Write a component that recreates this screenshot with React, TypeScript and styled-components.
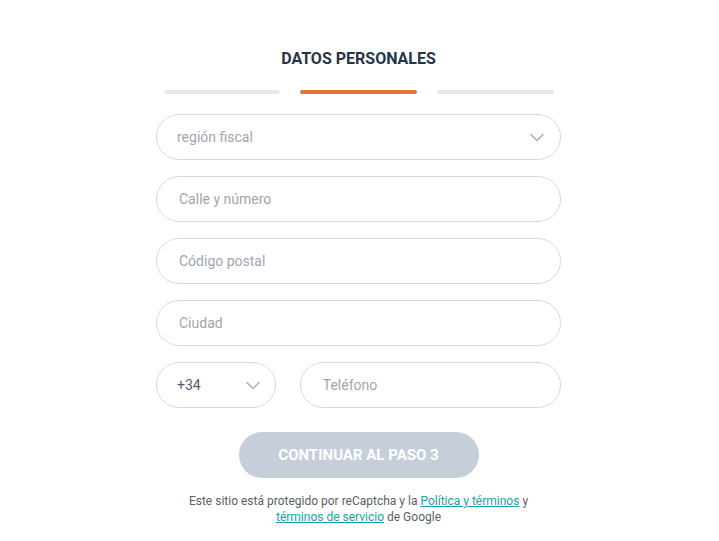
import React from "react";
import styled, { createGlobalStyle } from "styled-components";

const Global = createGlobalStyle`
  html, body { margin: 0; padding: 0; background: #fff; }
  body { font-family: Roboto, "Liberation Sans", Arial, sans-serif; }
  * { box-sizing: border-box; }
`;

const Page = styled.div`
  width: 717px;
  min-height: 541px;
  display: flex;
  flex-direction: column;
  align-items: center;
  padding-top: 49px;
`;

const Title = styled.h1`
  margin: 0;
  font-size: 16px;
  line-height: 20px;
  font-weight: 700;
  color: #263549;
  letter-spacing: 0;
`;

const Steps = styled.div`
  display: flex;
  gap: 20px;
  margin-top: 21px;
  width: 390px;
`;

const Step = styled.div<{ $active?: boolean }>`
  flex: 1;
  height: 4px;
  border-radius: 2px;
  background: ${(p) => (p.$active ? "#e4743b" : "#e6e8eb")};
`;

const Form = styled.form`
  width: 405px;
  margin-top: 20px;
  display: flex;
  flex-direction: column;
  gap: 16px;
`;

const Field = styled.div<{ $width?: number; $padLeft?: number; $padRight?: number }>`
  position: relative;
  height: 46px;
  width: ${(p) => (p.$width ? `${p.$width}px` : "100%")};
  border: 1px solid #d3d9df;
  border-radius: 23px;
  display: flex;
  align-items: center;
  padding: 0 ${(p) => p.$padRight ?? 16}px 0 ${(p) => p.$padLeft ?? 22}px;
  font-size: 14px;
  color: #a0a6ae;
`;

const Value = styled.span<{ $dark?: boolean }>`
  flex: 1;
  color: ${(p) => (p.$dark ? "#4e5d70" : "#a0a6ae")};
`;

const Row = styled.div`
  display: flex;
  gap: 24px;
`;

const Chevron = () => (
  <svg width="14" height="9" viewBox="0 0 14 9" fill="none">
    <path d="M1 1.5 L7 7.5 L13 1.5" stroke="#a9b0b8" strokeWidth="1.5" strokeLinecap="round" strokeLinejoin="round" />
  </svg>
);

const Button = styled.button`
  align-self: center;
  margin-top: 8px;
  width: 240px;
  height: 46px;
  border: none;
  border-radius: 23px;
  background: #c5ced9;
  color: #fff;
  font-family: inherit;
  font-weight: 700;
  font-size: 15px;
  text-transform: uppercase;
`;

const Legal = styled.p`
  margin: 15px 0 0;
  text-align: center;
  font-size: 12px;
  line-height: 16px;
  color: #5a5f66;
`;

const Link = styled.a`
  color: #1aa0a6;
  text-decoration: underline;
`;

export default function App() {
  return (
    <>
      <Global />
      <Page>
        <Title>DATOS PERSONALES</Title>
        <Steps>
          <Step />
          <Step $active />
          <Step />
        </Steps>
        <Form>
          <Field $padLeft={20} $padRight={16}>
            <Value>región fiscal</Value>
            <Chevron />
          </Field>
          <Field>
            <Value>Calle y número</Value>
          </Field>
          <Field>
            <Value>Código postal</Value>
          </Field>
          <Field>
            <Value>Ciudad</Value>
          </Field>
          <Row>
            <Field $width={120} $padLeft={20} $padRight={15}>
              <Value $dark>+34</Value>
              <Chevron />
            </Field>
            <Field $width={262}>
              <Value>Teléfono</Value>
            </Field>
          </Row>
          <Button type="button">Continuar al paso 3</Button>
        </Form>
        <Legal>
          Este sitio está protegido por reCaptcha y la <Link href="#">Política y términos</Link> y
          <br />
          <Link href="#">términos de servicio</Link> de Google
        </Legal>
      </Page>
    </>
  );
}
